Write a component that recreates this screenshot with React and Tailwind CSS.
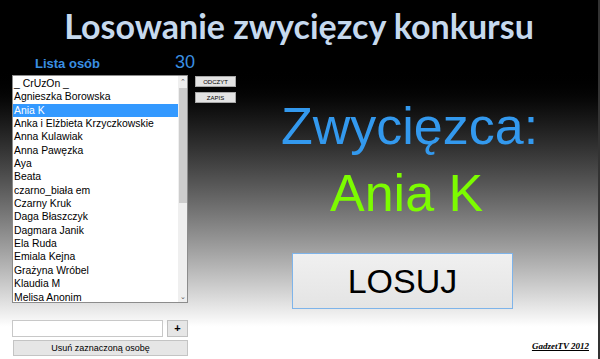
const names = [
  '_ CrUzOn _',
  'Agnieszka Borowska',
  'Ania K',
  'Anka i Elżbieta Krzyczkowskie',
  'Anna Kulawiak',
  'Anna Pawęzka',
  'Aya',
  'Beata',
  'czarno_biała em',
  'Czarny Kruk',
  'Daga Błaszczyk',
  'Dagmara Janik',
  'Ela Ruda',
  'Emiala Kejna',
  'Grażyna Wróbel',
  'Klaudia M',
  'Melisa Anonim',
];

const App = () => {
  const selected = 'Ania K';

  return (
    <div className="w-[600px] h-[359px] overflow-hidden bg-linear-to-b from-black from-[18%] to-white to-[91%] border-r-2 border-[#333] font-['Liberation_Sans',Arial,sans-serif]">
      <h1 className="h-[52px] pt-[6px] text-center text-[34px] font-bold leading-[40px] text-[#c6d9ee] font-['Lato',sans-serif]">
        Losowanie zwycięzcy konkursu
      </h1>

      <div className="flex">
        {/* lewa kolumna */}
        <div className="w-[176px] shrink-0 ml-[12px] flex flex-col">
          <div className="h-[23px] flex items-end whitespace-nowrap">
            <span className="shrink-0 ml-[23px] w-[75px] text-[13px] font-bold text-[#3a8fe2] leading-[16px] mb-[3px]">Lista osób</span>
            <span className="shrink-0 ml-[65px] text-[18px] text-[#3a8fe2] leading-[20px] mb-[3px]">30</span>
          </div>

          <div className="w-[176px] h-[228px] border border-[#8c8c8c] bg-white flex">
            <ul className="flex-1 pt-px">
              {names.map((name) => (
                <li
                  key={name}
                  className={
                    'h-[13.35px] leading-[13.35px] pl-[1px] text-[10.4px] whitespace-nowrap ' +
                    (name === selected ? 'bg-[#3399ff] text-white' : 'text-black')
                  }
                >
                  {name}
                </li>
              ))}
            </ul>
            <div className="w-[9px] bg-[#efefef] flex flex-col items-center">
              <span className="h-[12px] text-[7px] leading-[12px] text-[#555]">⌃</span>
              <div className="w-[8px] h-[115px] bg-[#cdcdcd]"></div>
              <div className="flex-1"></div>
              <span className="h-[10px] text-[7px] leading-[10px] text-[#555]">⌄</span>
            </div>
          </div>

          <div className="mt-[17px] flex gap-[4px]">
            <input className="w-[151px] h-[17px] bg-white border border-[#c8c8c8]" />
            <button className="w-[21px] h-[17px] bg-[#e6e6e6] border border-[#c0c0c0] text-[11px] font-bold leading-none">+</button>
          </div>
          <button className="mt-[3px] ml-px w-[175px] h-[16px] bg-[#e6e6e6] border border-[#c4c4c4] text-[9px] leading-none text-black">
            Usuń zaznaczoną osobę
          </button>
        </div>

        {/* przyciski odczyt / zapis */}
        <div className="ml-[7px] pt-[24px] flex flex-col gap-[5px]">
          <button className="w-[41px] h-[11px] bg-[#e3e3e3] border border-[#a8a8a8] text-[6px] leading-none text-black">ODCZYT</button>
          <button className="w-[41px] h-[11px] bg-[#e3e3e3] border border-[#a8a8a8] text-[6px] leading-none text-black">ZAPIS</button>
        </div>

        {/* zwycięzca */}
        <div className="flex-1 flex flex-col">
          <div className="mt-[48px] ml-[45px] text-[52px] leading-none text-[#3399ee]">Zwycięzca:</div>
          <div className="mt-[15px] ml-[94px] text-[52px] leading-none text-[#7cfc00]">Ania K</div>
          <button className="mt-[34px] ml-[56px] w-[221px] h-[56px] border border-[#7eb4ea] bg-linear-to-b from-[#f0f0f0] to-[#e4e4e4] text-[34px] leading-none text-black">
            LOSUJ
          </button>
          <div className="mt-[31px] mr-[9px] text-right text-[9px] font-bold italic underline text-black font-['Liberation_Serif',serif]">
            GadzetTV 2012
          </div>
        </div>
      </div>
    </div>
  );
};

export default App;
